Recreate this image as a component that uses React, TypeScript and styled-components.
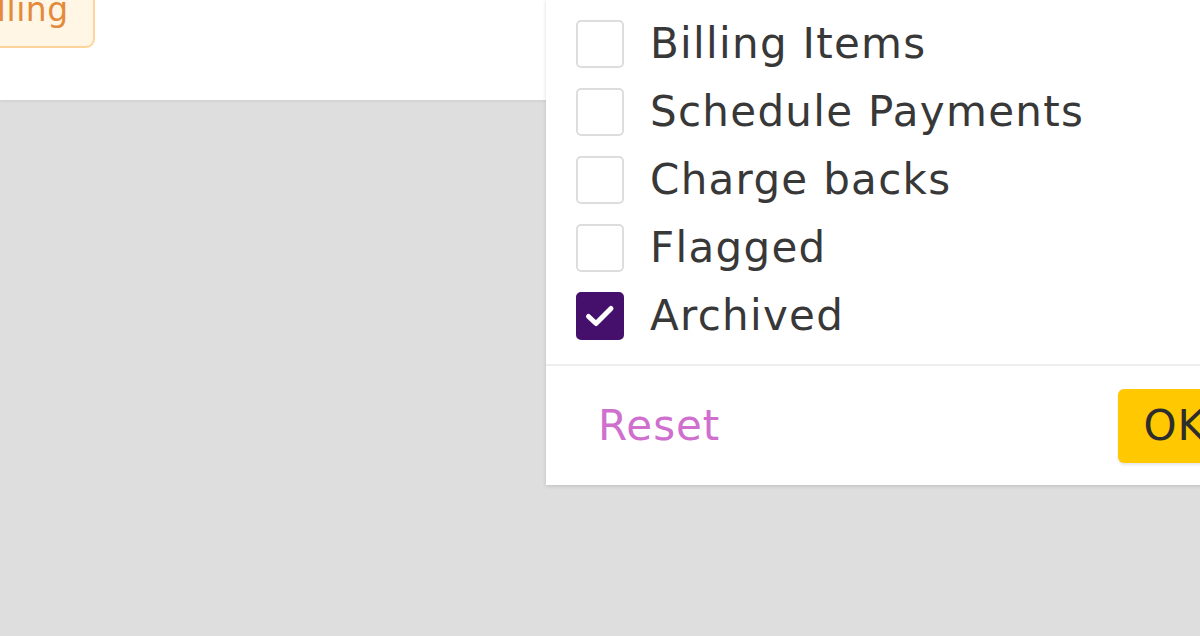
import React from "react";
import styled, { createGlobalStyle } from "styled-components";

const Global = createGlobalStyle`
  html, body { margin: 0; padding: 0; }
  body {
    background: #dedede;
    font-family: "DejaVu Sans", "Liberation Sans", sans-serif;
    color: #333;
  }
`;

const Page = styled.div`
  width: 1200px;
  height: 636px;
  display: flex;
  align-items: flex-start;
  overflow: hidden;
  background: #dedede;
`;

const LeftColumn = styled.div`
  flex: 0 0 546px;
  display: flex;
  flex-direction: column;
`;

const Header = styled.div`
  height: 100px;
  background: #fff;
  box-shadow: 0 1px 3px rgba(0, 0, 0, 0.08);
  overflow: hidden;
  display: flex;
  align-items: flex-start;
`;

const Badge = styled.span`
  display: inline-flex;
  align-items: flex-end;
  margin-top: -30px;
  margin-left: -62px;
  height: 78px;
  box-sizing: border-box;
  padding: 0 24px 20px 24px;
  background: #fff6e6;
  border: 2px solid #ffd49a;
  border-radius: 9px;
  color: #e48a3c;
  font-size: 33px;
  letter-spacing: 0.5px;
  line-height: 1;
`;

const Panel = styled.div`
  flex: 0 0 700px;
  height: 485px;
  background: #fff;
  box-shadow: 0 1px 4px rgba(0, 0, 0, 0.14);
  overflow: hidden;
  display: flex;
  flex-direction: column;
`;

const List = styled.ul`
  list-style: none;
  margin: -48px 0 0;
  padding: 0 0 24px 30px;
  display: flex;
  flex-direction: column;
  gap: 20px;
`;

const Row = styled.li`
  display: flex;
  align-items: center;
  gap: 26px;
  height: 48px;
`;

const Box = styled.span<{ $checked?: boolean }>`
  flex: 0 0 48px;
  width: 48px;
  height: 48px;
  box-sizing: border-box;
  border-radius: 5px;
  border: 2px solid ${(p) => (p.$checked ? "#45106b" : "#dddddd")};
  background: ${(p) => (p.$checked ? "#45106b" : "#fff")};
  display: flex;
  align-items: center;
  justify-content: center;
`;

const Label = styled.span`
  font-size: 42px;
  letter-spacing: 1.3px;
  color: #383838;
  line-height: 1;
  white-space: nowrap;
`;

const Divider = styled.div`
  border-top: 2px solid #eeeeee;
`;

const Footer = styled.div`
  flex: 1;
  display: flex;
  align-items: center;
  justify-content: space-between;
  padding: 0 15px 0 52px;
`;

const ResetButton = styled.button`
  background: none;
  border: none;
  padding: 0;
  font-family: inherit;
  font-size: 42px;
  letter-spacing: 1px;
  color: #cf70cf;
  cursor: pointer;
`;

const OkButton = styled.button`
  height: 74px;
  padding: 0 25px;
  background: #ffc800;
  border: none;
  border-radius: 6px;
  box-shadow: 0 2px 3px rgba(0, 0, 0, 0.1);
  font-family: inherit;
  font-size: 42px;
  letter-spacing: 1px;
  color: #2d2d2d;
  cursor: pointer;
`;

const Check = () => (
  <svg width="32" height="26" viewBox="0 0 32 26" fill="none">
    <path
      d="M4.5 13.5 L12 20.5 L27 5.5"
      stroke="#fff"
      strokeWidth="5"
      strokeLinecap="round"
      strokeLinejoin="round"
    />
  </svg>
);

const options = [
  { label: "Paid", checked: false },
  { label: "Billing Items", checked: false },
  { label: "Schedule Payments", checked: false },
  { label: "Charge backs", checked: false },
  { label: "Flagged", checked: false },
  { label: "Archived", checked: true },
];

export default function App() {
  return (
    <>
      <Global />
      <Page>
        <LeftColumn>
          <Header>
            <Badge>Billing</Badge>
          </Header>
        </LeftColumn>
        <Panel>
          <List>
            {options.map((o) => (
              <Row key={o.label}>
                <Box $checked={o.checked}>{o.checked && <Check />}</Box>
                <Label>{o.label}</Label>
              </Row>
            ))}
          </List>
          <Divider />
          <Footer>
            <ResetButton>Reset</ResetButton>
            <OkButton>OK</OkButton>
          </Footer>
        </Panel>
      </Page>
    </>
  );
}
